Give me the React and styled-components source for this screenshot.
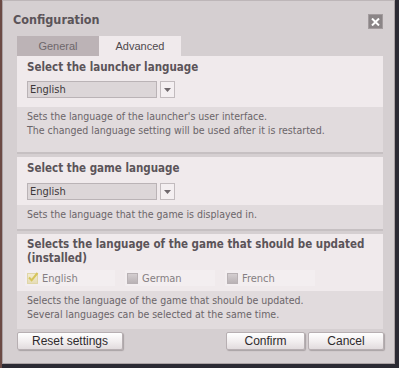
import styled, { createGlobalStyle } from "styled-components";

const GlobalStyle = createGlobalStyle`
  html, body {
    margin: 0;
    padding: 0;
    background: #2e2628;
  }
  body {
    font-family: "DejaVu Sans Condensed", "DejaVu Sans", sans-serif;
  }
`;

const Page = styled.div`
  width: 399px;
  height: 368px;
  padding: 0 0 0 2px;
  box-sizing: border-box;
  background: linear-gradient(to right, #6b4a44 0, #6b4a44 2px, #2b2a33 2px);
`;

const Dialog = styled.div`
  width: 393px;
  height: 364px;
  box-sizing: border-box;
  background: #d5cfd1;
  border: 1px solid #aaa2a4;
  border-top-color: #bdb6b8;
  padding: 0 10px 0 14px;
  display: flex;
  flex-direction: column;
`;

const TitleBar = styled.div`
  height: 35px;
  display: flex;
  align-items: center;
  justify-content: space-between;
  margin-left: -4px;
`;

const Title = styled.div`
  font-size: 12.5px;
  font-weight: bold;
  color: #5b5459;
  padding-top: 1px;
`;

const CloseButton = styled.div`
  width: 13px;
  height: 13px;
  background: #8b8587;
  border: 1px solid #a39c9e;
  display: flex;
  align-items: center;
  justify-content: center;
  margin-right: 1px;
  margin-top: 6px;
`;

const Tabs = styled.div`
  display: flex;
  height: 20px;
`;

const Tab = styled.div`
  width: 82px;
  display: flex;
  align-items: center;
  justify-content: center;
  font-family: "Liberation Sans", Arial, sans-serif;
  font-size: 11px;
  color: ${(p) => (p.$active ? "#4e484c" : "#6e676b")};
  background: ${(p) => (p.$active ? "#f0eaec" : "#bcb3b6")};
`;

const Panel = styled.div`
  width: 366px;
  display: flex;
  flex-direction: column;
`;

const Section = styled.div`
  display: flex;
  flex-direction: column;
  border-bottom: ${(p) => (p.$last ? "none" : "2px solid #c6c0c2")};
  margin-bottom: ${(p) => (p.$last ? 0 : 3)}px;
`;

const SectionTop = styled.div`
  background: #f0eaec;
  padding: ${(p) => p.$pad || "4px 10px 9px"};
  display: flex;
  flex-direction: column;
  gap: ${(p) => p.$gap || 7}px;
`;

const Heading = styled.div`
  font-size: 11.5px;
  font-weight: bold;
  color: #5b5459;
  line-height: 14px;
`;

const SelectRow = styled.div`
  display: flex;
  gap: 3px;
`;

const Select = styled.div`
  width: 130px;
  height: 17px;
  box-sizing: border-box;
  background: #dcd6d8;
  border: 1px solid #bab3b6;
  font-size: 11px;
  color: #3d393b;
  padding: 0 2px;
  line-height: 15px;
`;

const DropButton = styled.div`
  width: 15px;
  height: 17px;
  box-sizing: border-box;
  background: #f4eff1;
  border: 1px solid #c2bbbe;
  display: flex;
  align-items: center;
  justify-content: center;
`;

const Description = styled.div`
  background: #e1dbdd;
  padding: 2px 10px 0;
  min-height: ${(p) => p.$height}px;
  box-sizing: border-box;
  font-size: 10.5px;
  line-height: 14px;
  color: #6b6569;
`;

const CheckRow = styled.div`
  display: flex;
  gap: 10px;
  margin-left: -2px;
`;

const CheckItem = styled.div`
  width: 88px;
  height: 16px;
  display: flex;
  align-items: center;
  gap: 4px;
  padding-left: 2px;
  background: #f3eef0;
  font-size: 11px;
  color: #857e82;
`;

const Box = styled.span`
  width: 11px;
  height: 11px;
  box-sizing: border-box;
  border: 1px solid ${(p) => (p.$checked ? "#e0d6a8" : "#b8b1b4")};
  background: ${(p) =>
    p.$checked
      ? "linear-gradient(#f3ecd0, #e6dcb8)"
      : "linear-gradient(#d4ced0, #b9b2b5)"};
  position: relative;
  flex: none;
`;

const Check = styled.svg`
  position: absolute;
  left: -1px;
  top: -3px;
`;

const Footer = styled.div`
  display: flex;
  align-items: center;
  margin-top: 3px;
`;

const Button = styled.div`
  width: ${(p) => p.$w}px;
  height: 18px;
  box-sizing: border-box;
  margin-left: ${(p) => p.$ml || 0}px;
  display: flex;
  align-items: center;
  justify-content: center;
  font-family: "Liberation Sans", Arial, sans-serif;
  font-size: 12px;
  color: #2e2a2c;
  background: linear-gradient(#ffffff, #f1edee 55%, #e2dcde);
  border: 1px solid #b7afb2;
  border-radius: 2px;
  box-shadow: 1px 1px 1px rgba(90, 80, 84, 0.35);
`;

const Arrow = () => (
  <svg width="7" height="4" viewBox="0 0 7 4">
    <path d="M0 0h7L3.5 4z" fill="#6f686c" />
  </svg>
);

const LanguageSelect = () => (
  <SelectRow>
    <Select>English</Select>
    <DropButton>
      <Arrow />
    </DropButton>
  </SelectRow>
);

const CheckOption = ({ label, checked }) => (
  <CheckItem>
    <Box $checked={checked}>
      {checked && (
        <Check width="12" height="12" viewBox="0 0 12 12">
          <path
            d="M2 6.5l2.6 2.8L10.5 2"
            stroke="#d6c45a"
            strokeWidth="2"
            fill="none"
          />
        </Check>
      )}
    </Box>
    {label}
  </CheckItem>
);

export default function App() {
  return (
    <>
      <GlobalStyle />
      <Page>
        <Dialog>
          <TitleBar>
            <Title>Configuration</Title>
            <CloseButton>
              <svg width="9" height="8" viewBox="0 0 9 8">
                <path
                  d="M1 0.5l7 7M8 0.5l-7 7"
                  stroke="#ffffff"
                  strokeWidth="2"
                />
              </svg>
            </CloseButton>
          </TitleBar>
          <Tabs>
            <Tab>General</Tab>
            <Tab $active>Advanced</Tab>
          </Tabs>
          <Panel>
            <Section>
              <SectionTop>
                <Heading>Select the launcher language</Heading>
                <LanguageSelect />
              </SectionTop>
              <Description $height={45}>
                Sets the language of the launcher's user interface.
                <br />
                The changed language setting will be used after it is restarted.
              </Description>
            </Section>
            <Section>
              <SectionTop $pad="4px 10px 5px" $gap={8}>
                <Heading>Select the game language</Heading>
                <LanguageSelect />
              </SectionTop>
              <Description $height={24}>
                Sets the language that the game is displayed in.
              </Description>
            </Section>
            <Section $last>
              <SectionTop $pad="3px 10px 5px" $gap={5}>
                <Heading>
                  Selects the language of the game that should be updated
                  <br />
                  (installed)
                </Heading>
                <CheckRow>
                  <CheckOption label="English" checked />
                  <CheckOption label="German" />
                  <CheckOption label="French" />
                </CheckRow>
              </SectionTop>
              <Description $height={38}>
                Selects the language of the game that should be updated.
                <br />
                Several languages can be selected at the same time.
              </Description>
            </Section>
          </Panel>
          <Footer>
            <Button $w={106}>Reset settings</Button>
            <Button $w={79} $ml={103}>
              Confirm
            </Button>
            <Button $w={76} $ml={3}>
              Cancel
            </Button>
          </Footer>
        </Dialog>
      </Page>
    </>
  );
}
